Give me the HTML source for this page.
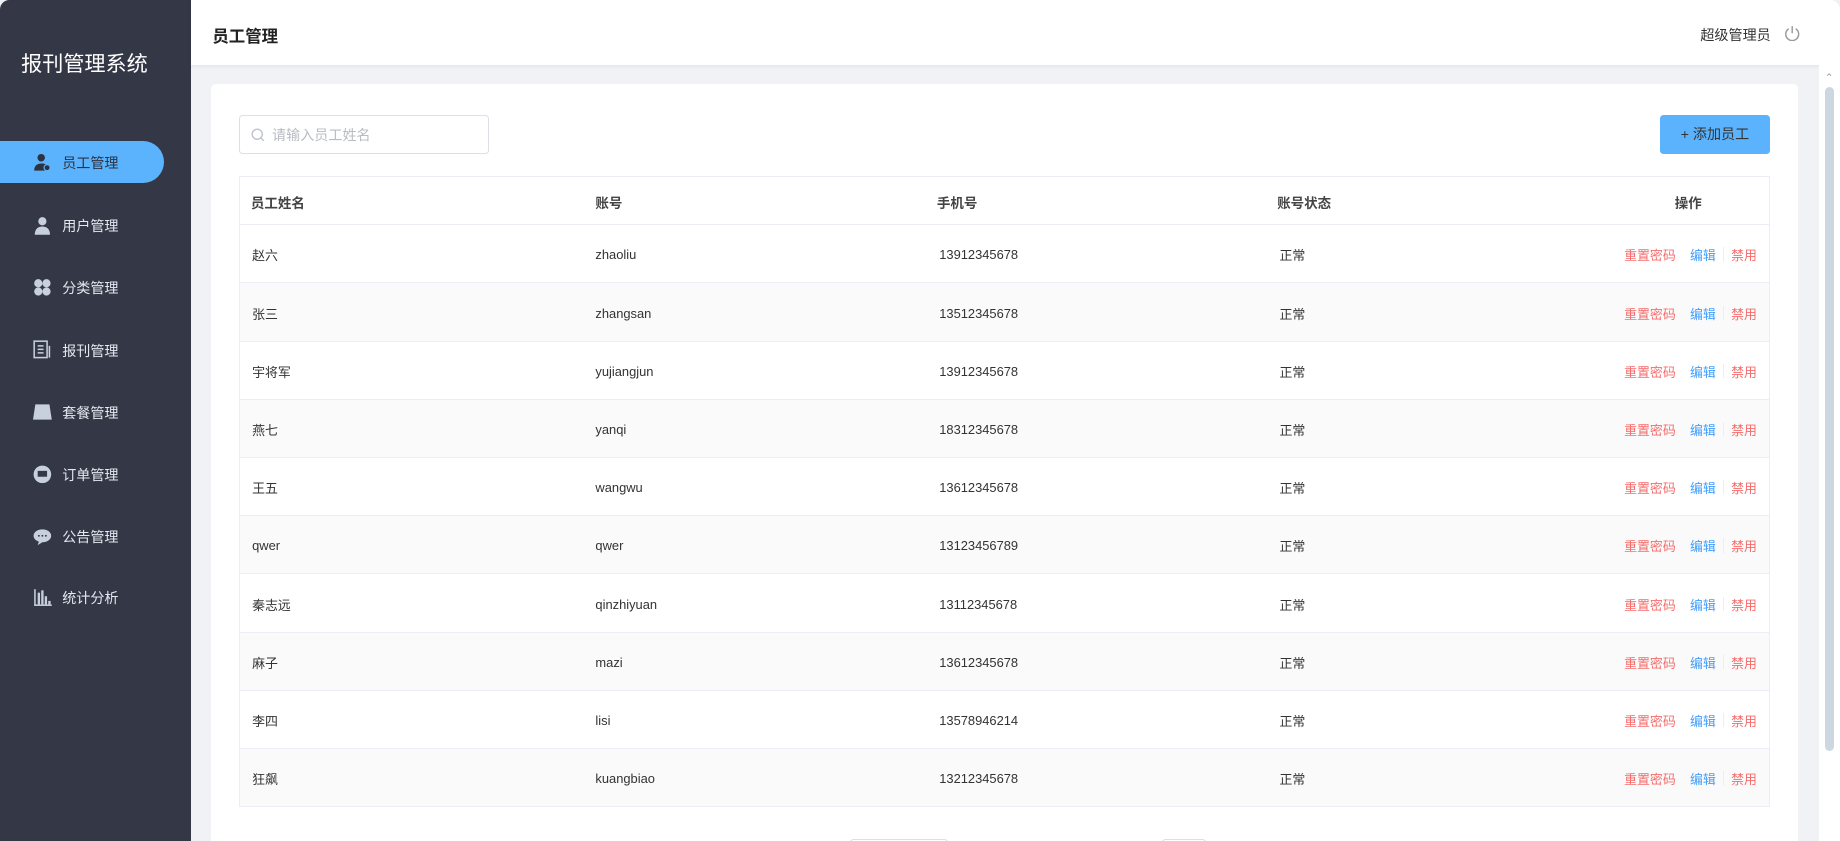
<!DOCTYPE html>
<html><head><meta charset="utf-8"><style>
*{box-sizing:border-box;margin:0;padding:0}
html,body{width:1840px;height:841px;overflow:hidden;background:#fff}
#w{zoom:1.173469;width:1568px;height:717px;position:relative;font-family:"Liberation Sans","Noto Sans CJK SC",sans-serif;background:#f0f2f5;overflow:hidden}
.side{position:absolute;left:0;top:0;width:163px;height:717px;background:#343846;border-top-left-radius:8px}
.logo{position:absolute;left:18px;top:41px;color:#fff;font-size:18px}
.item{position:absolute;left:0;width:140px;height:36px;color:#e4e8ef;font-size:12px;line-height:38px;padding-left:53px}
.item.act{background:#5cb3fd;border-radius:0 18px 18px 0;color:#2d3140}
.ic{position:absolute;left:28px;top:10px;width:16px;height:16px}
.head{position:absolute;left:163px;top:0;width:1405px;height:55px;background:#fff;box-shadow:0 1px 3px rgba(0,0,0,.06);border-top-right-radius:8px}
.head .t{position:absolute;left:18px;top:20px;font-size:14px;font-weight:bold;color:#222}
.head .u{position:absolute;left:1286px;top:21px;font-size:12px;color:#333}
.card{position:absolute;left:180px;top:72px;width:1352px;height:660px;background:#fff;border-radius:4px}
.search{position:absolute;left:24px;top:26px;width:213px;height:33px;border:1px solid #dcdfe6;border-radius:3px;color:#b8bcc4;font-size:12px;line-height:33px;padding-left:27px}
.btn{position:absolute;left:1235px;top:26px;width:93px;height:33px;background:#5cb3fd;border-radius:3px;color:#333;font-size:12px;line-height:34px;text-align:center}
table{position:absolute;left:24px;top:78px;width:1304px;border-collapse:collapse;border:1px solid #ebeef5;font-size:11px;color:#333}
td,th{height:49.6px;border-bottom:1px solid #ebeef5;text-align:left;font-weight:normal;padding:2px 0 0}
th{height:41px;font-weight:bold;font-size:11.5px;color:#444}
tbody tr:nth-child(odd) td{background:#fff}
tbody tr:nth-child(even) td{background:#fafafa}
.op{text-align:right;padding-right:10px;font-size:11px}
.r{color:#f56c6c}.b{color:#409eff}.sep{display:inline-block;width:1px;height:12px;background:#eee;margin:0 6px;vertical-align:-1px}
.sb{position:absolute;left:1550px;top:55px;width:18px;height:662px;background:#fff}
.th{position:absolute;left:1555px;top:74px;width:8px;height:566px;background:#cdd7e1;border-radius:4px}
</style></head><body><div id="w">
<div class="side">
<div class="logo">报刊管理系统</div>
<div class="item act" style="top:120px"><svg class="ic" viewBox="0 0 16 16"><circle cx="7" cy="4" r="3.2" fill="#2d3140"/><path d="M1 15c0-4 2.5-6 6-6s4 1 4 1v5z" fill="#2d3140"/><circle cx="12" cy="12.5" r="2.6" fill="#2d3140" stroke="#5cb3fd" stroke-width="1"/></svg>员工管理</div>
<div class="item" style="top:174px"><svg class="ic" viewBox="0 0 16 16" fill="#c8d0dc"><circle cx="8" cy="4.5" r="3.5"/><path d="M1.5 16c0-5 3-7 6.5-7s6.5 2 6.5 7z"/></svg>用户管理</div>
<div class="item" style="top:227px"><svg class="ic" viewBox="0 0 16 16" fill="#c8d0dc"><circle cx="4.5" cy="4.5" r="3.5"/><circle cx="11.5" cy="4.5" r="3.5"/><circle cx="4.5" cy="11.5" r="3.5"/><circle cx="11.5" cy="11.5" r="3.5"/></svg>分类管理</div>
<div class="item" style="top:280px"><svg class="ic" viewBox="0 0 16 16" fill="none" stroke="#c8d0dc" stroke-width="1.3"><rect x="1" y="1" width="11" height="14"/><path d="M4 5h5M4 8h5M4 11h5M14 5v10"/></svg>报刊管理</div>
<div class="item" style="top:333px"><svg class="ic" viewBox="0 0 16 16" fill="#c8d0dc"><path d="M2 2h12l2 13H0z"/></svg>套餐管理</div>
<div class="item" style="top:386px"><svg class="ic" viewBox="0 0 16 16"><circle cx="8" cy="8" r="7.5" fill="#c8d0dc"/><rect x="4" y="5" width="8" height="5" fill="#343846"/></svg>订单管理</div>
<div class="item" style="top:439px"><svg class="ic" viewBox="0 0 16 16"><path d="M8 2c4.4 0 7.5 2.5 7.5 5.5S12.4 13 8 13l-4 2.5 1-3C2 11.5 0.5 9.5 0.5 7.5 0.5 4.5 3.6 2 8 2z" fill="#c8d0dc"/><circle cx="5" cy="7.5" r=".8" fill="#343846"/><circle cx="8" cy="7.5" r=".8" fill="#343846"/><circle cx="11" cy="7.5" r=".8" fill="#343846"/></svg>公告管理</div>
<div class="item" style="top:491px"><svg class="ic" viewBox="0 0 16 16" fill="#c8d0dc"><rect x="1" y="1" width="1.3" height="14"/><rect x="1" y="14" width="15" height="1.3"/><rect x="4" y="4" width="2" height="10"/><rect x="7" y="2" width="2" height="12"/><rect x="10" y="7" width="2" height="7"/><rect x="13" y="11" width="2" height="3"/></svg>统计分析</div>
</div>
<div class="head"><div class="t">员工管理</div><div class="u">超级管理员</div>
<svg style="position:absolute;left:1357px;top:21px" width="14" height="14" viewBox="0 0 14 14" fill="none" stroke="#999" stroke-width="1.2"><path d="M4 3.2A5.5 5.5 0 1 0 10 3.2M7 1v6"/></svg></div>
<div class="card">
<div class="search"><svg style="position:absolute;left:9px;top:10px" width="12" height="12" viewBox="0 0 12 12" fill="none" stroke="#c0c4cc" stroke-width="1.2"><circle cx="5.3" cy="5.3" r="4.3"/><path d="M8.5 8.5l2.5 2.5"/></svg>请输入员工姓名</div>
<div class="btn">+ 添加员工</div>
<table>
<colgroup><col style="width:303px"><col style="width:291px"><col style="width:290px"><col style="width:150px"><col></colgroup>
<thead><tr><th style="padding-left:9px">员工姓名</th><th style="padding-left:0">账号</th><th>手机号</th><th style="padding-left:0">账号状态</th><th style="text-align:right;padding-right:57px">操作</th></tr></thead>
<tbody>
<tr><td style="padding-left:10px">赵六</td><td>zhaoliu</td><td style="padding-left:2px">13912345678</td><td style="padding-left:2px">正常</td><td class="op"><span class="r">重置密码</span>&nbsp;&nbsp;&nbsp;&nbsp;<span class="b">编辑</span><span class="sep"></span><span class="r">禁用</span></td></tr>
<tr><td style="padding-left:10px">张三</td><td>zhangsan</td><td style="padding-left:2px">13512345678</td><td style="padding-left:2px">正常</td><td class="op"><span class="r">重置密码</span>&nbsp;&nbsp;&nbsp;&nbsp;<span class="b">编辑</span><span class="sep"></span><span class="r">禁用</span></td></tr>
<tr><td style="padding-left:10px">宇将军</td><td>yujiangjun</td><td style="padding-left:2px">13912345678</td><td style="padding-left:2px">正常</td><td class="op"><span class="r">重置密码</span>&nbsp;&nbsp;&nbsp;&nbsp;<span class="b">编辑</span><span class="sep"></span><span class="r">禁用</span></td></tr>
<tr><td style="padding-left:10px">燕七</td><td>yanqi</td><td style="padding-left:2px">18312345678</td><td style="padding-left:2px">正常</td><td class="op"><span class="r">重置密码</span>&nbsp;&nbsp;&nbsp;&nbsp;<span class="b">编辑</span><span class="sep"></span><span class="r">禁用</span></td></tr>
<tr><td style="padding-left:10px">王五</td><td>wangwu</td><td style="padding-left:2px">13612345678</td><td style="padding-left:2px">正常</td><td class="op"><span class="r">重置密码</span>&nbsp;&nbsp;&nbsp;&nbsp;<span class="b">编辑</span><span class="sep"></span><span class="r">禁用</span></td></tr>
<tr><td style="padding-left:10px">qwer</td><td>qwer</td><td style="padding-left:2px">13123456789</td><td style="padding-left:2px">正常</td><td class="op"><span class="r">重置密码</span>&nbsp;&nbsp;&nbsp;&nbsp;<span class="b">编辑</span><span class="sep"></span><span class="r">禁用</span></td></tr>
<tr><td style="padding-left:10px">秦志远</td><td>qinzhiyuan</td><td style="padding-left:2px">13112345678</td><td style="padding-left:2px">正常</td><td class="op"><span class="r">重置密码</span>&nbsp;&nbsp;&nbsp;&nbsp;<span class="b">编辑</span><span class="sep"></span><span class="r">禁用</span></td></tr>
<tr><td style="padding-left:10px">麻子</td><td>mazi</td><td style="padding-left:2px">13612345678</td><td style="padding-left:2px">正常</td><td class="op"><span class="r">重置密码</span>&nbsp;&nbsp;&nbsp;&nbsp;<span class="b">编辑</span><span class="sep"></span><span class="r">禁用</span></td></tr>
<tr><td style="padding-left:10px">李四</td><td>lisi</td><td style="padding-left:2px">13578946214</td><td style="padding-left:2px">正常</td><td class="op"><span class="r">重置密码</span>&nbsp;&nbsp;&nbsp;&nbsp;<span class="b">编辑</span><span class="sep"></span><span class="r">禁用</span></td></tr>
<tr><td style="padding-left:10px">狂飙</td><td>kuangbiao</td><td style="padding-left:2px">13212345678</td><td style="padding-left:2px">正常</td><td class="op"><span class="r">重置密码</span>&nbsp;&nbsp;&nbsp;&nbsp;<span class="b">编辑</span><span class="sep"></span><span class="r">禁用</span></td></tr>
</tbody></table>
<div style="position:absolute;left:544px;top:643px;width:84px;height:10px;border:1px solid #dcdfe6;border-bottom:none;border-radius:3px 3px 0 0"></div>
<div style="position:absolute;left:810px;top:643px;width:38px;height:10px;border:1px solid #dcdfe6;border-bottom:none;border-radius:3px 3px 0 0"></div>
</div>
<div class="sb"><div style="position:absolute;left:5px;top:6px;font-size:9px;color:#999">⌃</div></div>
<div class="th"></div>
</div></body></html>
